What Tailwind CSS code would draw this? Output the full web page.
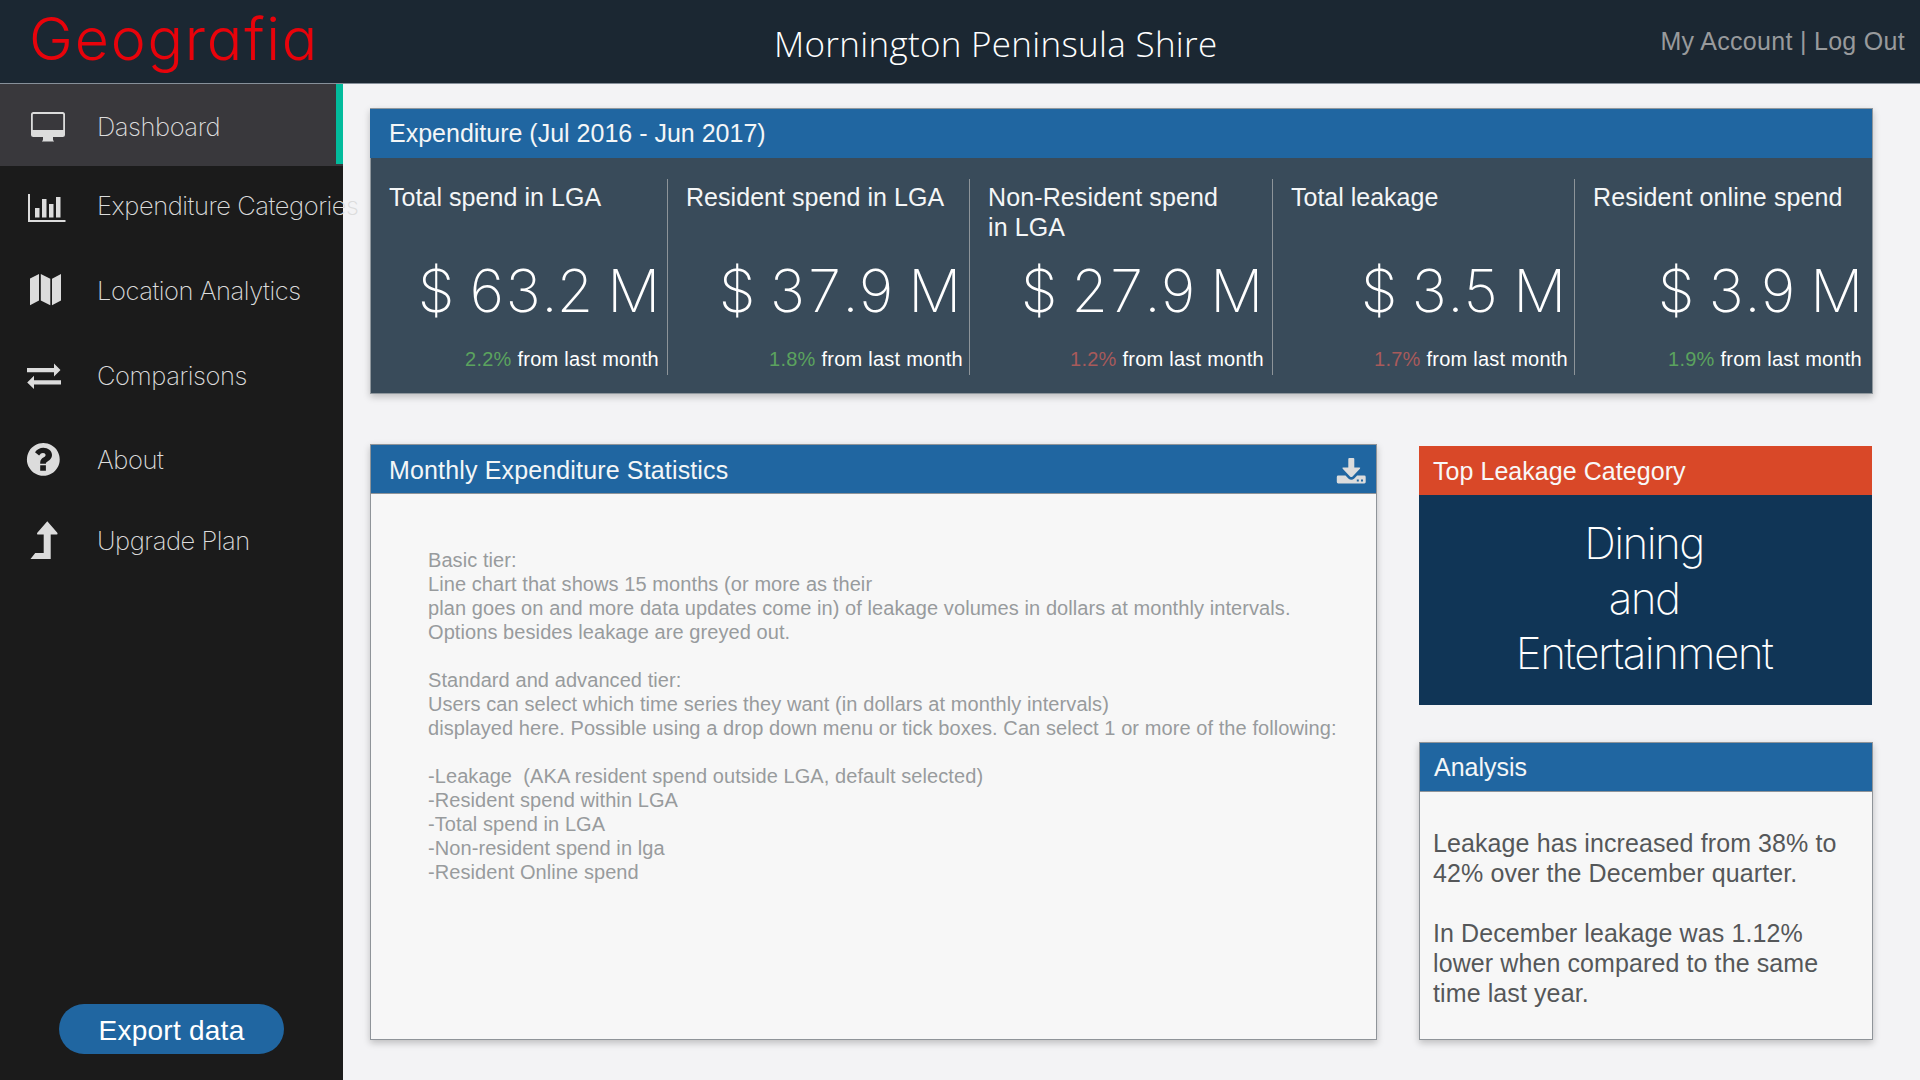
<!DOCTYPE html>
<html lang="en">
<head>
<meta charset="utf-8">
<title>Geografia Dashboard</title>
<script src="https://cdn.jsdelivr.net/npm/@tailwindcss/browser@4"></script>
</head>
<body class="flex h-[1080px] w-[1920px] flex-col overflow-hidden bg-[#f3f3f5] font-['Liberation_Sans',sans-serif]">

<header class="flex h-[84px] shrink-0 items-center border-b border-[#87909a] bg-[#1b2732]">
  <div class="w-[774px] pb-[6px] pl-[29px] font-['Inter',sans-serif] text-[59px] leading-[60px] font-light tracking-[1.8px] text-[#e8030b] [font-feature-settings:'cv11']">Geografia</div>
  <h1 class="pt-[4px] font-['Open_Sans',sans-serif] text-[35px] leading-[44px] font-light tracking-[0.3px] whitespace-nowrap text-white">Mornington Peninsula Shire</h1>
  <div class="ml-auto pr-[15px] pb-[2px] text-[25px] leading-[30px] tracking-[0.3px] text-[#989a9c]">My Account | Log Out</div>
</header>

<div class="flex min-h-0 flex-1">
  <aside class="flex w-[343px] shrink-0 flex-col bg-[#1b1b1b]">
    <nav class="relative z-10 flex flex-col font-['Inter',sans-serif] text-[25.5px] leading-[30px] font-extralight tracking-[-0.45px] whitespace-nowrap text-[#dcdcdc]">
      <a class="flex h-[82px] items-center bg-[#39383c]">
        <svg class="h-[82px] w-[97px] shrink-0" viewBox="0 84 97 82" fill="#dcdcdc"><path fill-rule="evenodd" d="M33.500 112h29a2.500 2.500 0 0 1 2.500 2.500v20a2.500 2.500 0 0 1-2.500 2.500h-9.500v2.500q0 1.200 1.200 2h-12.400q1.200-.8 1.200-2v-2.500h-9.500a2.500 2.500 0 0 1-2.500-2.500v-20a2.500 2.500 0 0 1 2.500-2.500zM33.500 114a.7.7 0 0 0-.7.7v15.300h30.400v-15.300a.7.7 0 0 0-.7-.7z"/></svg>
        <span class="pt-[3px]">Dashboard</span>
        <span class="ml-auto h-[80px] w-[7px] self-start bg-[#02bb9c]"></span>
      </a>
      <a class="flex h-[80px] items-center">
        <svg class="h-[80px] w-[97px] shrink-0" viewBox="0 166 97 80" fill="#dcdcdc"><path d="M28 194h2v26h35.500v2H28zM35 208h4.500v9.500H35zM42 199h4.500v18.500H42zM49 204h4.500v13.500H49zM56 197h4.500v20.500H56z"/></svg>
        <span>Expenditure Categories</span>
      </a>
      <a class="flex h-[89px] items-center">
        <svg class="h-[89px] w-[97px] shrink-0" viewBox="0 246 97 89" fill="#dcdcdc"><path d="M30 278.500l9-4.500v26.500l-9 4.800zM40.800 274l9.500 4.800v26.500l-9.500-4.800zM52 278.800l9-4.800v26.500l-9 4.800z"/></svg>
        <span>Location Analytics</span>
      </a>
      <a class="flex h-[81px] items-center">
        <svg class="h-[81px] w-[97px] shrink-0" viewBox="0 335 97 81" fill="#dcdcdc"><path d="M27 368h27v-4.500l6.500 6.500-6.500 6.500v-4.300H27zM61 380.200H34v-4.500l-6.800 6.700 6.800 6.600v-4.500h27z"/></svg>
        <span>Comparisons</span>
      </a>
      <a class="flex h-[87px] items-center">
        <svg class="h-[87px] w-[97px] shrink-0" viewBox="0 416 97 87" fill="#dcdcdc"><path fill-rule="evenodd" d="M43.300 443a16.400 16.400 0 1 0 .01 0zM40.200 465.300h5.700v5.500h-5.700zM35 452.200C37 449.200 40 447.700 43.300 447.700c4.600 0 8.700 2.900 8.700 7.200 0 3-1.700 4.600-3.800 6-1.500 1-2.300 1.400-2.300 2.900h-5.700v-1c0-3 1.500-4.200 3.200-5.300 1.300-.8 2.200-1.300 2.200-2.500 0-1.300-1.100-2-2.600-2-1.800 0-2.600.8-3.900 2.600z"/></svg>
        <span>About</span>
      </a>
      <a class="flex h-[76px] items-center">
        <svg class="h-[76px] w-[97px] shrink-0" viewBox="0 503 97 76" fill="#dcdcdc"><path d="M47.300 521.200l10.200 11.800q.3 1.600-.8 1.600h-6v24.400H30.500l4.700-6h8.500v-18.400h-5.800q-1.300 0-.8-1.600z"/></svg>
        <span>Upgrade Plan</span>
      </a>
    </nav>
    <button class="mt-auto mb-[26px] ml-[59px] h-[50px] w-[225px] rounded-[25px] bg-[#2066a1] pt-[4px] text-[28px] leading-[32px] tracking-[0.25px] text-white">Export data</button>
  </aside>

  <main class="flex flex-1 flex-col pt-[24px] pl-[27px] pr-[47px] pb-[40px]">
    <section class="h-[286px] shrink-0 border border-[#8f979d] bg-[#394b5a] text-[#f4f6f7] shadow-[0_3px_7px_rgba(0,0,0,0.22)]">
      <h2 class="-ml-px h-[49px] bg-[#2066a1] pt-[9px] pl-[19px] text-[25px] leading-[30px]">Expenditure (Jul 2016 - Jun 2017)</h2>
      <div class="mt-[21px] grid h-[196px] grid-cols-[297px_302px_303px_302px_1fr] text-right">
        <div class="border-r border-[#8d9499] pt-[3px] pr-[8px] pl-[18px]">
          <h3 class="h-[60px] text-left text-[25px] leading-[30px] tracking-[0.05px]">Total spend in LGA</h3>
          <p class="mt-[19px] font-['Inter',sans-serif] text-[59px] leading-[60px] font-extralight tracking-[-1.3px] whitespace-nowrap text-white tabular-nums [font-kerning:none]">$ 63.2 M</p>
          <p class="mt-[26px] text-[20px] leading-[24px] tracking-[0.25px] whitespace-nowrap text-white"><span class="text-[#5ba35e]">2.2%</span> from last month</p>
        </div>
        <div class="border-r border-[#8d9499] pt-[3px] pr-[6px] pl-[18px]">
          <h3 class="h-[60px] text-left text-[25px] leading-[30px] tracking-[0.05px]">Resident spend in LGA</h3>
          <p class="mt-[19px] mr-[3px] font-['Inter',sans-serif] text-[59px] leading-[60px] font-extralight tracking-[-1.3px] whitespace-nowrap text-white tabular-nums [font-kerning:none]">$ 37.9 M</p>
          <p class="mt-[26px] text-[20px] leading-[24px] tracking-[0.25px] whitespace-nowrap text-white"><span class="text-[#5ba35e]">1.8%</span> from last month</p>
        </div>
        <div class="border-r border-[#8d9499] pt-[3px] pr-[8px] pl-[18px]">
          <h3 class="h-[60px] text-left text-[25px] leading-[30px] tracking-[0.12px]">Non-Resident spend<br>in LGA</h3>
          <p class="mt-[19px] mr-[2px] font-['Inter',sans-serif] text-[59px] leading-[60px] font-extralight tracking-[-1.3px] whitespace-nowrap text-white tabular-nums [font-kerning:none]">$ 27.9 M</p>
          <p class="mt-[26px] text-[20px] leading-[24px] tracking-[0.25px] whitespace-nowrap text-white"><span class="text-[#a85a5a]">1.2%</span> from last month</p>
        </div>
        <div class="border-r border-[#8d9499] pt-[3px] pr-[6px] pl-[18px]">
          <h3 class="h-[60px] text-left text-[25px] leading-[30px]">Total leakage</h3>
          <p class="mt-[19px] mr-[3px] font-['Inter',sans-serif] text-[59px] leading-[60px] font-extralight tracking-[-1.3px] whitespace-nowrap text-white tabular-nums [font-kerning:none]">$ 3.5 M</p>
          <p class="mt-[26px] text-[20px] leading-[24px] tracking-[0.25px] whitespace-nowrap text-white"><span class="text-[#a85a5a]">1.7%</span> from last month</p>
        </div>
        <div class="pt-[3px] pr-[10px] pl-[18px]">
          <h3 class="h-[60px] text-left text-[25px] leading-[30px] tracking-[0.1px]">Resident online spend</h3>
          <p class="mt-[19px] font-['Inter',sans-serif] text-[59px] leading-[60px] font-extralight tracking-[-1.3px] whitespace-nowrap text-white tabular-nums [font-kerning:none]">$ 3.9 M</p>
          <p class="mt-[26px] text-[20px] leading-[24px] tracking-[0.25px] whitespace-nowrap text-white"><span class="text-[#5ba35e]">1.9%</span> from last month</p>
        </div>
      </div>
    </section>

    <div class="mt-[50px] flex min-h-0 flex-1 justify-between">
      <section class="flex w-[1007px] flex-col border border-[#8f9499] bg-[#f7f7f7] shadow-[0_3px_7px_rgba(0,0,0,0.22)]">
        <div class="flex h-[49px] shrink-0 items-center justify-between border-b border-[#8f9499] bg-[#2066a1] pr-[8px] pl-[18px]">
          <h2 class="pt-px text-[25px] leading-[30px] tracking-[0.15px] text-[#f4f6f7]">Monthly Expenditure Statistics</h2>
          <svg class="mt-[4px] h-[28px] w-[32px]" viewBox="0 0 32 28" fill="#dcdcdc"><path fill-rule="evenodd" d="M12.300 2q0-1 1-1h4q1 0 1 1v8.500h5q1.600 0 .6 1.300l-7.300 7.600q-1.300 1.300-2.600 0l-7.300-7.600q-1-1.300.6-1.300h5zM2.200 18.500h7.300l2.800 2.900q3 2.600 6 0l2.800-2.900h7.200q1.400 0 1.400 1.400v5.200q0 1.400-1.400 1.400H2.200q-1.400 0-1.400-1.400v-5.200q0-1.400 1.400-1.400zM20.800 22.500v2h2v-2zM25 22.500v2h2v-2z"/></svg>
        </div>
        <div class="pt-[54px] pl-[57px] text-[20px] leading-[24px] tracking-[0.08px] whitespace-pre text-[#989b9d]">Basic tier:
Line chart that shows 15 months (or more as their
plan goes on and more data updates come in) of leakage volumes in dollars at monthly intervals.
Options besides leakage are greyed out.

Standard and advanced tier:
Users can select which time series they want (in dollars at monthly intervals)
displayed here. Possible using a drop down menu or tick boxes. Can select 1 or more of the following:

-Leakage  (AKA resident spend outside LGA, default selected)
-Resident spend within LGA
-Total spend in LGA
-Non-resident spend in lga
-Resident Online spend</div>
      </section>

      <div class="flex w-[454px] flex-col">
        <section class="mt-[2px] mr-[1px] flex h-[259px] flex-col bg-[#103556]">
          <h2 class="h-[49px] bg-[#d94828] pt-[10px] pl-[14px] text-[25px] leading-[30px] tracking-[0.05px] text-[#f8f8f8]">Top Leakage Category</h2>
          <p class="pt-[21px] pr-[3px] text-center font-['Inter',sans-serif] text-[44px] leading-[55px] font-extralight tracking-[-1.6px] text-white">Dining<br>and<br>Entertainment</p>
        </section>
        <section class="mt-[37px] flex min-h-0 flex-1 flex-col border border-[#8f9499] bg-[#f7f7f7] shadow-[0_3px_7px_rgba(0,0,0,0.22)]">
          <h2 class="h-[49px] shrink-0 border-b border-[#8f9499] bg-[#2066a1] pt-[9px] pl-[14px] text-[25px] leading-[30px] text-[#f4f6f7]">Analysis</h2>
          <div class="pt-[36px] pl-[13px] text-[25px] leading-[30px] tracking-[0.1px] whitespace-pre text-[#555759]">Leakage has increased from 38% to
42% over the December quarter.

In December leakage was 1.12%
lower when compared to the same
time last year.</div>
        </section>
      </div>
    </div>
  </main>
</div>
</body>
</html>
